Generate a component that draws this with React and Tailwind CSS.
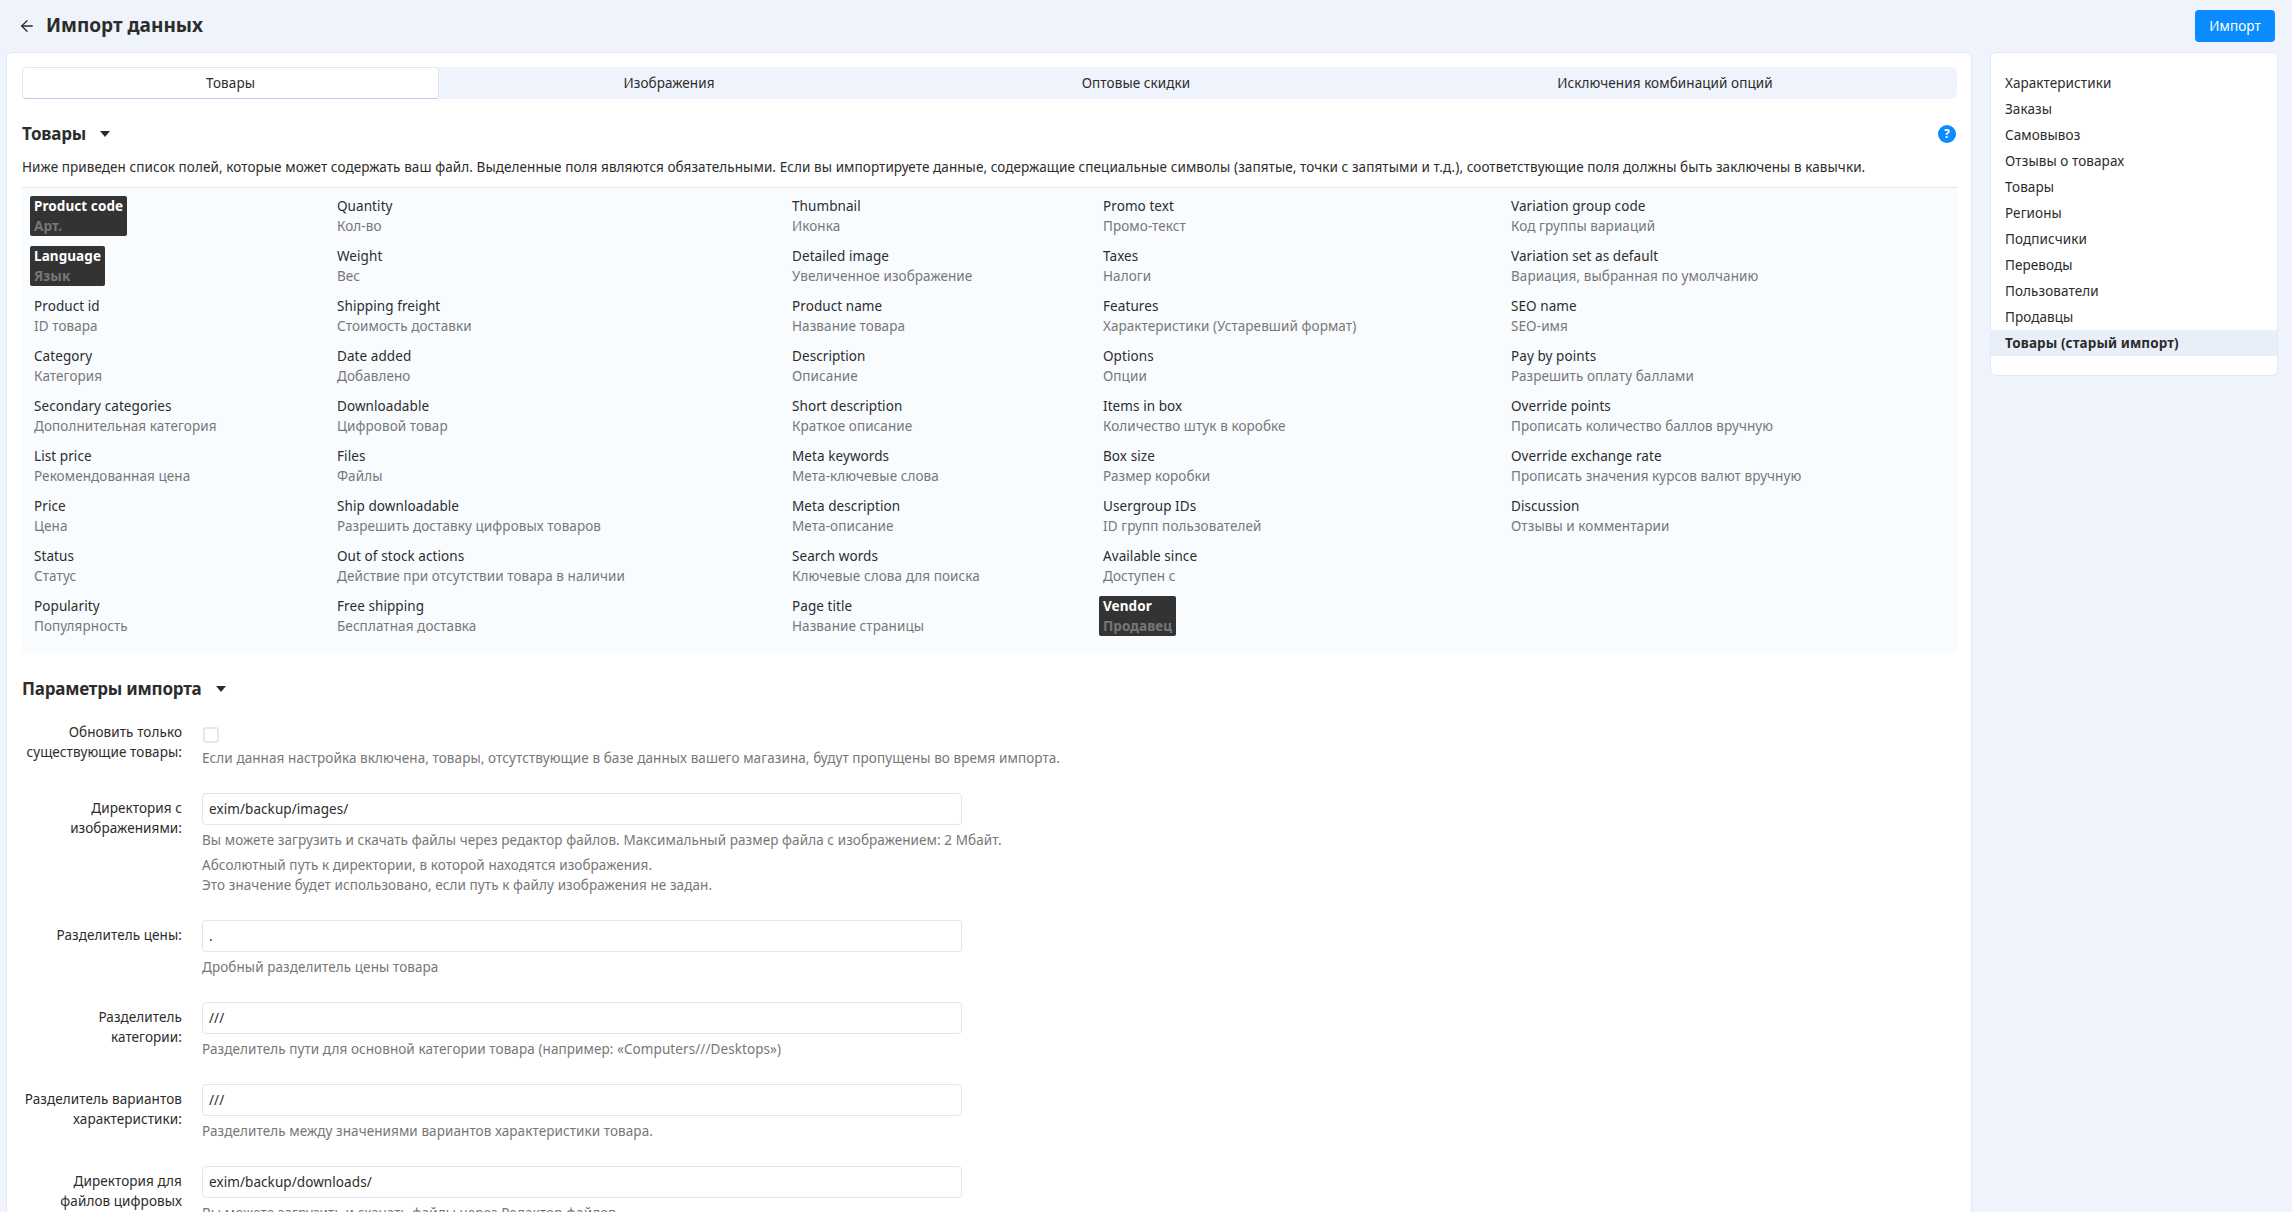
import React from 'react';
import { ArrowLeft } from 'lucide-react';

const fontStack = 'font-["Noto_Sans","Open_Sans",sans-serif]';

const rows = [
  [['Product code', 'Арт.', true], ['Quantity', 'Кол-во'], ['Thumbnail', 'Иконка'], ['Promo text', 'Промо-текст'], ['Variation group code', 'Код группы вариаций']],
  [['Language', 'Язык', true], ['Weight', 'Вес'], ['Detailed image', 'Увеличенное изображение'], ['Taxes', 'Налоги'], ['Variation set as default', 'Вариация, выбранная по умолчанию']],
  [['Product id', 'ID товара'], ['Shipping freight', 'Стоимость доставки'], ['Product name', 'Название товара'], ['Features', 'Характеристики (Устаревший формат)'], ['SEO name', 'SEO-имя']],
  [['Category', 'Категория'], ['Date added', 'Добавлено'], ['Description', 'Описание'], ['Options', 'Опции'], ['Pay by points', 'Разрешить оплату баллами']],
  [['Secondary categories', 'Дополнительная категория'], ['Downloadable', 'Цифровой товар'], ['Short description', 'Краткое описание'], ['Items in box', 'Количество штук в коробке'], ['Override points', 'Прописать количество баллов вручную']],
  [['List price', 'Рекомендованная цена'], ['Files', 'Файлы'], ['Meta keywords', 'Мета-ключевые слова'], ['Box size', 'Размер коробки'], ['Override exchange rate', 'Прописать значения курсов валют вручную']],
  [['Price', 'Цена'], ['Ship downloadable', 'Разрешить доставку цифровых товаров'], ['Meta description', 'Мета-описание'], ['Usergroup IDs', 'ID групп пользователей'], ['Discussion', 'Отзывы и комментарии']],
  [['Status', 'Статус'], ['Out of stock actions', 'Действие при отсутствии товара в наличии'], ['Search words', 'Ключевые слова для поиска'], ['Available since', 'Доступен с'], null],
  [['Popularity', 'Популярность'], ['Free shipping', 'Бесплатная доставка'], ['Page title', 'Название страницы'], ['Vendor', 'Продавец', true], null],
];

const sections = ['Характеристики', 'Заказы', 'Самовывоз', 'Отзывы о товарах', 'Товары', 'Регионы', 'Подписчики', 'Переводы', 'Пользователи', 'Продавцы'];

const Caret = () => (
  <svg width="10" height="6" viewBox="0 0 10 6" className="ml-[14px]">
    <path d="M0 0h10L5 6z" fill="#2c2c2c" />
  </svg>
);

const Field = ({ name, hint, required }) => {
  if (!name) return <div />;
  return (
    <div className="h-[50px]">
      <div className={`inline-block h-10 rounded-[2px] px-1 leading-5 ${required ? 'bg-[#333333] font-bold' : ''}`}>
        <div className={required ? 'text-white' : 'text-[#2c2c2c]'}>{name}</div>
        <div className="text-[#777777]">{hint}</div>
      </div>
    </div>
  );
};

const Row = ({ label, children }) => (
  <div className="mt-[25px] flex">
    <div className="w-[160px] shrink-0 pt-[5px] text-right leading-5 text-[#2c2c2c]">{label}</div>
    <div className="ml-[20px] grow text-[#777777]">{children}</div>
  </div>
);

const TextInput = ({ value }) => (
  <div className="flex h-8 w-[760px] items-center rounded-[4px] border border-[#dfe5f2] bg-white px-[6px] text-[#2c2c2c]">{value}</div>
);

export default function App() {
  return (
    <div className={`h-screen overflow-hidden bg-[#eff3fb] text-[13.5px] tracking-[0.08px] ${fontStack}`}>
      <header className="flex h-[52px] items-center justify-between pr-[17px] pl-[18px]">
        <div className="flex items-center">
          <ArrowLeft size={18} strokeWidth={1.75} color="#2c2c2c" />
          <h1 className="-mt-[2px] ml-[10px] text-[19px] font-bold tracking-normal text-[#2c2c2c]">Импорт данных</h1>
        </div>
        <button className="h-8 w-20 rounded-[4px] bg-[#0a8cff] text-white">Импорт</button>
      </header>

      <div className="flex items-start gap-[18px] pl-[6px]">
        <main className="h-[1200px] w-[1966px] rounded-t-[6px] border border-[#e3e8f4] bg-white pt-[14px] pr-[14px] pl-[15px]">
          <div className="flex h-8 rounded-[6px] bg-[#eff3fb] text-[#2c2c2c]">
            <div className="flex w-[417px] items-center justify-center rounded-[4px] border border-[#dfe5f2] border-b-[#bccbe8] bg-white">Товары</div>
            <div className="flex w-[460px] items-center justify-center">Изображения</div>
            <div className="flex w-[474px] items-center justify-center">Оптовые скидки</div>
            <div className="flex grow items-center justify-center">Исключения комбинаций опций</div>
          </div>

          <div className="mt-[22px] flex h-[26px] items-center justify-between pr-[1px]">
            <h2 className="flex items-center text-[17px] font-bold tracking-[-0.2px] text-[#2c2c2c]">Товары<Caret /></h2>
            <span className="flex h-[18px] w-[18px] items-center justify-center rounded-full bg-[#0a8cff] text-[12px] font-bold text-white">?</span>
          </div>
          <p className="mt-[10px] leading-5 text-[#2c2c2c]">
            Ниже приведен список полей, которые может содержать ваш файл. Выделенные поля являются обязательными. Если вы импортируете данные, содержащие специальные символы (запятые, точки с запятыми и т.д.), соответствующие поля должны быть заключены в кавычки.
          </p>

          <div className="mt-[10px] grid grid-cols-[303px_455px_311px_408px_1fr] border-t border-[#dfe5f2] bg-[#f9fcff] pt-2 pb-[7px] pl-2">
            {rows.flat().map((f, i) => (
              <Field key={i} name={f?.[0]} hint={f?.[1]} required={f?.[2]} />
            ))}
          </div>

          <h2 className="mt-[23px] mb-[-10px] flex h-[26px] items-center text-[17px] font-bold tracking-[-0.2px] text-[#2c2c2c]">Параметры импорта<Caret /></h2>

          <Row label={<>Обновить только<br />существующие товары:</>}>
            <div className="mt-[10px] ml-[1px] h-4 w-4 rounded-[3px] border-2 border-[#e3e8f4] bg-white" />
            <p className="mt-[5px] leading-5">Если данная настройка включена, товары, отсутствующие в базе данных вашего магазина, будут пропущены во время импорта.</p>
          </Row>

          <Row label={<>Директория с<br />изображениями:</>}>
            <TextInput value="exim/backup/images/" />
            <p className="mt-[5px] leading-5">Вы можете загрузить и скачать файлы через редактор файлов. Максимальный размер файла с изображением: 2 Мбайт.</p>
            <p className="mt-[5px] leading-5">Абсолютный путь к директории, в которой находятся изображения.<br />Это значение будет использовано, если путь к файлу изображения не задан.</p>
          </Row>

          <Row label="Разделитель цены:">
            <TextInput value="." />
            <p className="mt-[5px] leading-5">Дробный разделитель цены товара</p>
          </Row>

          <Row label={<>Разделитель<br />категории:</>}>
            <TextInput value="///" />
            <p className="mt-[5px] leading-5">Разделитель пути для основной категории товара (например: «Computers///Desktops»)</p>
          </Row>

          <Row label={<>Разделитель вариантов<br />характеристики:</>}>
            <TextInput value="///" />
            <p className="mt-[5px] leading-5">Разделитель между значениями вариантов характеристики товара.</p>
          </Row>

          <Row label={<>Директория для<br />файлов цифровых</>}>
            <TextInput value="exim/backup/downloads/" />
            <p className="mt-[5px] leading-5">Вы можете загрузить и скачать файлы через Редактор файлов.</p>
          </Row>
        </main>

        <aside className="h-[324px] w-[288px] rounded-[6px] border border-[#e3e8f4] bg-white pt-[17px]">
          {sections.map((s) => (
            <div key={s} className="flex h-[26px] items-center px-[14px] text-[#2c2c2c]">{s}</div>
          ))}
          <div className="flex h-[26px] items-center bg-[#e9eff9] px-[14px] font-bold text-[#2c2c2c]">Товары (старый импорт)</div>
        </aside>
      </div>
    </div>
  );
}
